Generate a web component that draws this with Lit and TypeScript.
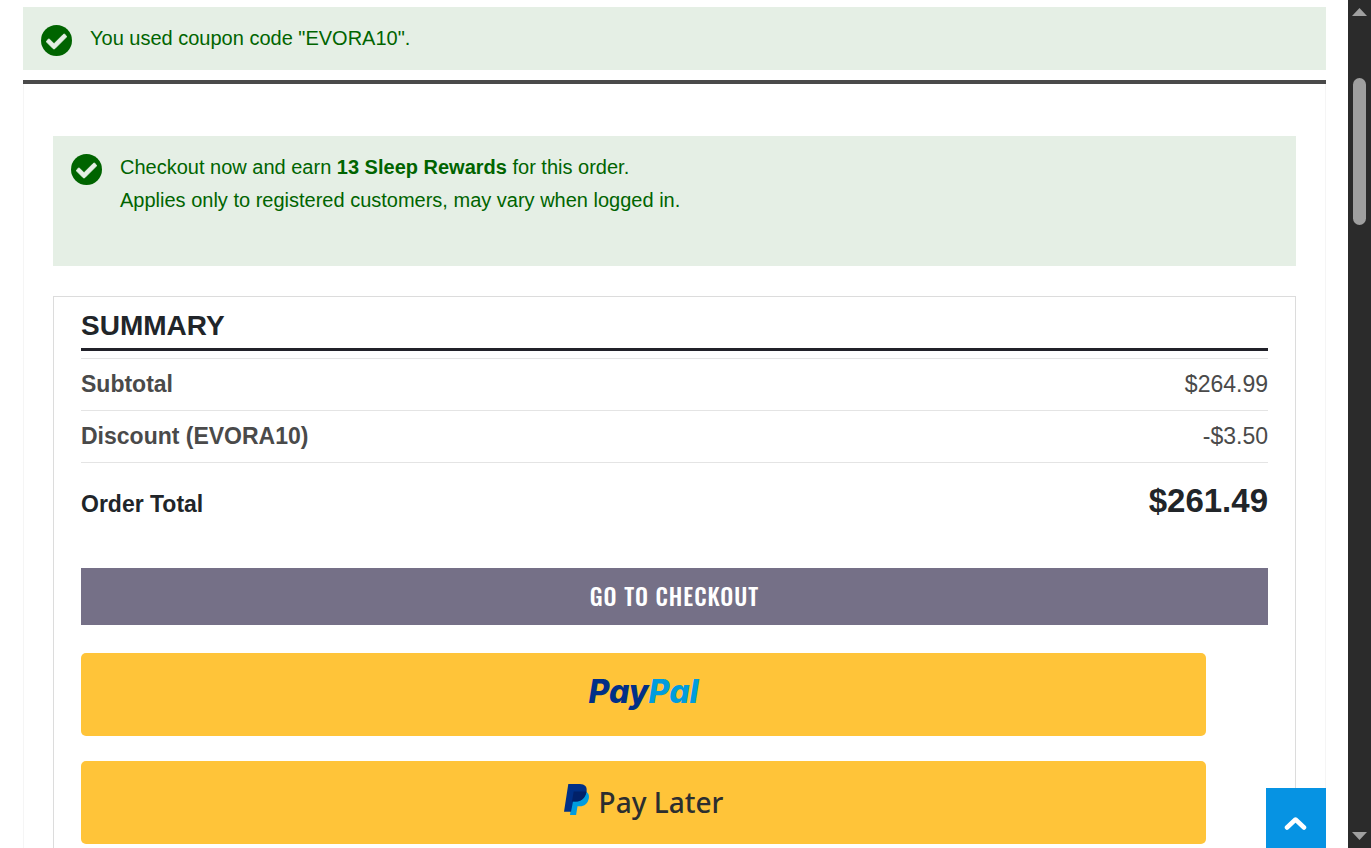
import { LitElement, html, css } from "lit";
import { customElement, property } from "lit/decorators.js";

interface TotalLine {
  label: string;
  amount: string;
}

@customElement("success-message")
class SuccessMessage extends LitElement {
  static styles = css`
    :host {
      display: block;
      background: #e5efe5;
      color: #006400;
    }
    .row {
      display: flex;
      align-items: flex-start;
      gap: 18px;
      padding: 15px 18px 14px;
    }
    .icon {
      flex: none;
      width: 31px;
      height: 31px;
      margin-top: 3px;
    }
    .body {
      font-size: 20px;
      line-height: 33px;
    }
  `;

  render() {
    return html`
      <div class="row" role="status">
        <svg class="icon" viewBox="8 8 496 496" aria-hidden="true">
          <circle cx="256" cy="256" r="248" fill="currentColor" />
          <path
            fill="#e5efe5"
            stroke="#e5efe5"
            stroke-width="16"
            d="M227.314 387.314l184-184c6.248-6.248 6.248-16.379 0-22.627l-22.627-22.627c-6.248-6.249-16.379-6.249-22.628 0L216 308.118l-70.059-70.059c-6.248-6.248-16.379-6.248-22.628 0l-22.627 22.627c-6.248 6.248-6.248 16.379 0 22.627l104 104c6.249 6.249 16.379 6.249 22.628.001z"
          />
        </svg>
        <div class="body"><slot></slot></div>
      </div>
    `;
  }
}

@customElement("order-summary")
class OrderSummary extends LitElement {
  @property({ attribute: false }) lines: TotalLine[] = [];
  @property() total = "";

  static styles = css`
    :host {
      display: block;
      border: 1px solid #dcdcdc;
      padding: 12px 27px 40px;
    }
    .title {
      margin: 0 0 7px;
      padding-bottom: 6px;
      border-bottom: 3px solid #212129;
      font-size: 28px;
      line-height: 33px;
      font-weight: 700;
      color: #212529;
    }
    .totals {
      width: 100%;
      border-collapse: separate;
      border-spacing: 0;
      margin-bottom: 28px;
      color: #4a4a4a;
    }
    th,
    td {
      padding: 0;
      border-top: 1px solid #e4e4e4;
      font-size: 23px;
      line-height: 51px;
      vertical-align: baseline;
    }
    th {
      text-align: left;
      font-weight: 700;
    }
    td {
      text-align: right;
    }
    .grand th,
    .grand td {
      padding-top: 2px;
      color: #212529;
      line-height: 71px;
    }
    .grand td {
      font-size: 33px;
      font-weight: 700;
    }
    .checkout {
      display: block;
      width: 100%;
      padding: 0;
      border: 0;
      background: #757087;
      color: #fff;
      font-family: Oswald, "Liberation Sans Narrow", "Roboto Condensed", "Liberation Sans", sans-serif;
      font-size: 23px;
      font-weight: 500;
      line-height: 57px;
      letter-spacing: 1px;
      text-transform: uppercase;
      cursor: pointer;
    }
    .wallets {
      display: grid;
      gap: 25px;
      margin: 28px 62px 0 0;
    }
    .wallet {
      display: flex;
      align-items: center;
      justify-content: center;
      gap: 10px;
      height: 83px;
      padding: 0 0 6px;
      border: 0;
      border-radius: 5px;
      background: #ffc439;
      cursor: pointer;
    }
    .wordmark {
      font-family: Inter, sans-serif;
      font-feature-settings: "cv11";
      font-size: 32px;
      line-height: 40px;
      font-weight: 800;
      font-style: italic;
      color: #003087;
    }
    .light {
      color: #009cde;
    }
    .mark {
      width: 25px;
      height: 31px;
    }
    .later {
      padding-top: 4px;
      font-family: "Noto Sans", sans-serif;
      font-size: 28px;
      line-height: 36px;
      font-weight: 500;
      color: #2c2e2f;
    }
  `;

  render() {
    return html`
      <h2 class="title">SUMMARY</h2>
      <table class="totals">
        <tbody>
          ${this.lines.map(
            (line) => html`<tr>
              <th scope="row">${line.label}</th>
              <td>${line.amount}</td>
            </tr>`
          )}
          <tr class="grand">
            <th scope="row">Order Total</th>
            <td>${this.total}</td>
          </tr>
        </tbody>
      </table>
      <button class="checkout" type="button">Go to Checkout</button>
      <div class="wallets">
        <button class="wallet" type="button">
          <span class="wordmark">Pay<span class="light">Pal</span></span>
        </button>
        <button class="wallet" type="button">
          <svg class="mark" viewBox="0 0 25 31" aria-hidden="true">
            <path fill="#009cde" d="M9 8h13.500c2.200 1.400 2.800 3.800 2.300 6.500-1.100 5.200-4.300 7.800-9 7.800h-2.300L12.100 31H6z" />
            <path fill="#003087" d="M4.300 0h11.500c5 0 7.700 2.800 6.700 7.700-1.200 6.100-5 9.800-10.700 9.800H9L7 27.700H0z" />
            <path fill="#012169" d="M9.700 7.500h12.800c-1.200 6.200-5 10-10.700 10H8z" />
          </svg>
          <span class="later">Pay Later</span>
        </button>
      </div>
    `;
  }
}

@customElement("page-scrollbar")
class PageScrollbar extends LitElement {
  static styles = css`
    :host {
      display: flex;
      flex-direction: column;
      align-items: center;
      box-sizing: border-box;
      width: 23px;
      padding: 8px 0;
      background: #2b2b2b;
    }
    .arrow {
      width: 15px;
      height: 8px;
      fill: #a0a0a0;
    }
    .track {
      flex: 1;
      width: 13px;
      padding-top: 62px;
    }
    .thumb {
      height: 147px;
      border-radius: 7px;
      background: #9f9f9f;
    }
  `;

  render() {
    return html`
      <svg class="arrow" viewBox="0 0 15 8"><path d="M0 8 7.500 0 15 8z" /></svg>
      <div class="track"><div class="thumb"></div></div>
      <svg class="arrow" viewBox="0 0 15 8"><path d="M0 0 7.500 8 15 0z" /></svg>
    `;
  }
}

@customElement("app-root")
class AppRoot extends LitElement {
  private lines: TotalLine[] = [
    { label: "Subtotal", amount: "$264.99" },
    { label: "Discount (EVORA10)", amount: "-$3.50" },
  ];

  static styles = css`
    :host {
      display: flex;
      height: 100vh;
      overflow: hidden;
      background: #fff;
      font-family: "Liberation Sans", Arial, sans-serif;
    }
    .page {
      position: relative;
      flex: 1;
      min-width: 0;
      overflow: hidden;
      padding: 7px 22px 0 23px;
    }
    .cart {
      margin-top: 10px;
      border-top: 4px solid #4a4a4a;
    }
    .content {
      padding: 52px 29px 0;
      border: solid #f5f5f5;
      border-width: 0 1px;
    }
    .rewards {
      margin-bottom: 30px;
    }
    .rewards p {
      margin: 0;
    }
    .rewards .note {
      padding-bottom: 35px;
    }
    .to-top {
      position: absolute;
      right: 22px;
      bottom: 0;
      display: flex;
      align-items: center;
      justify-content: center;
      box-sizing: border-box;
      width: 60px;
      height: 60px;
      padding: 10px 0 0;
      background: #0693e3;
    }
    .chevron {
      width: 24px;
      height: 16px;
    }
  `;

  render() {
    return html`
      <main class="page">
        <success-message>You used coupon code "EVORA10".</success-message>
        <section class="cart">
          <div class="content">
            <success-message class="rewards">
              <p>Checkout now and earn <strong>13 Sleep Rewards</strong> for this order.</p>
              <p class="note">Applies only to registered customers, may vary when logged in.</p>
            </success-message>
            <order-summary .lines=${this.lines} total="$261.49"></order-summary>
          </div>
        </section>
        <a class="to-top" href="#" aria-label="Back to top">
          <svg class="chevron" viewBox="0 0 24 16">
            <path
              d="M3 12.500 11.500 4.500l8.500 8"
              fill="none"
              stroke="#fff"
              stroke-width="4.500"
              stroke-linecap="round"
              stroke-linejoin="round"
            />
          </svg>
        </a>
      </main>
      <page-scrollbar aria-hidden="true"></page-scrollbar>
    `;
  }
}
